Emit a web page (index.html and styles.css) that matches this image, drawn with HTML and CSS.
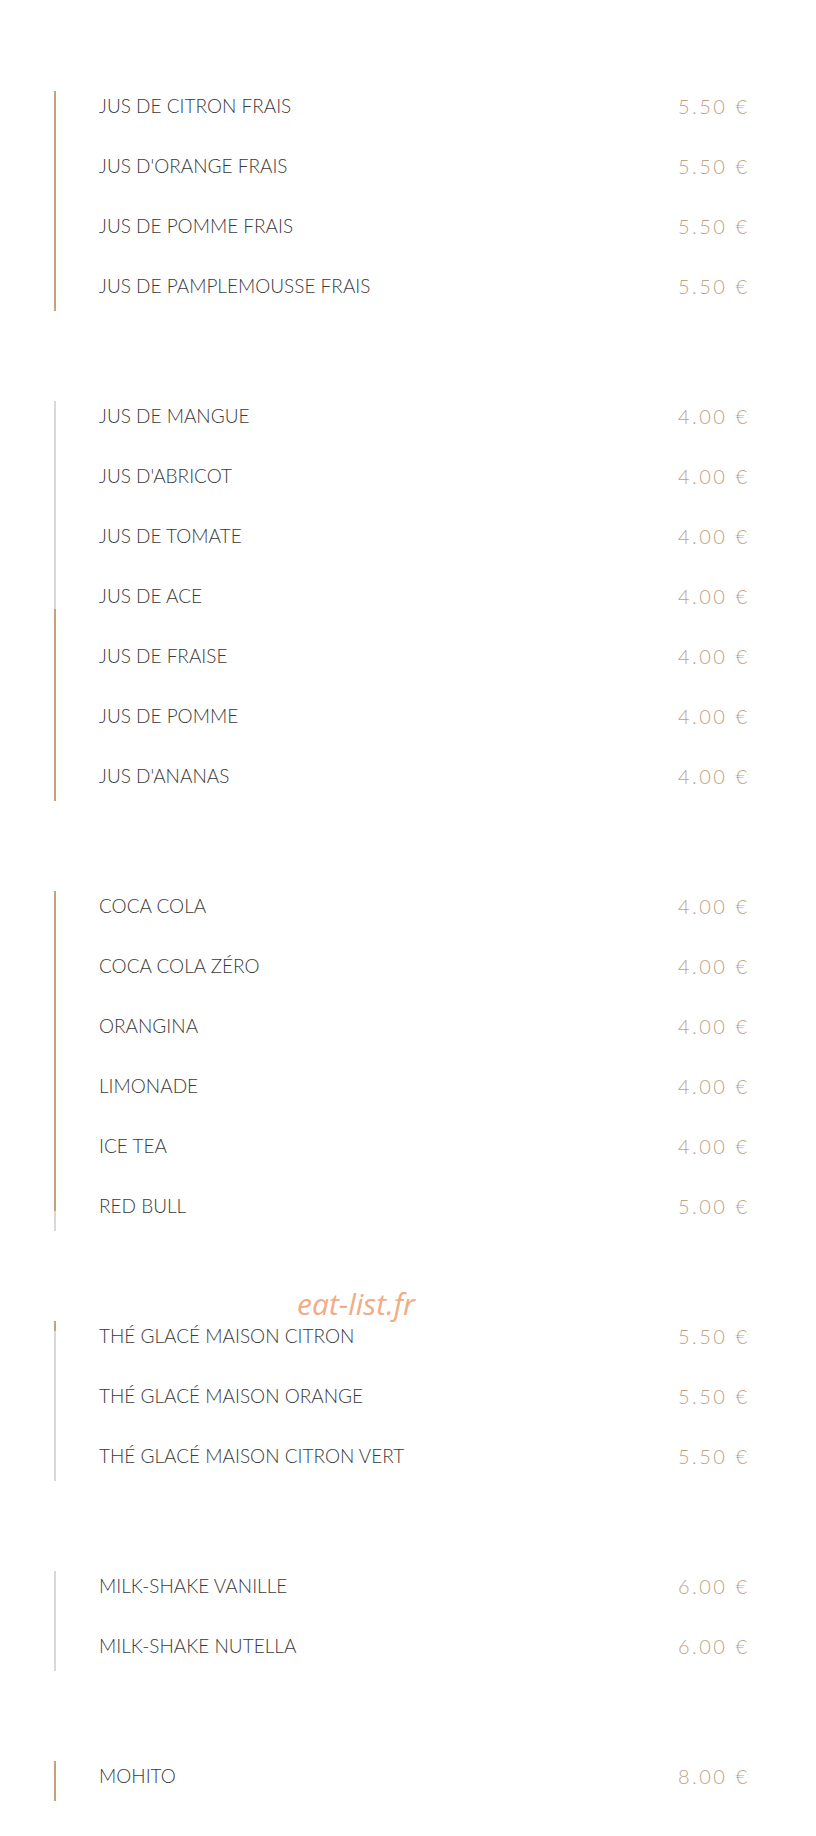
FILE: index.html
```html
<!DOCTYPE html>
<html lang="fr">

<head>
    <meta charset="UTF-8">
    <meta name="viewport" content="width=device-width, initial-scale=1.0">
    <title>Carte - Boissons</title>
    <link rel="stylesheet" href="styles.css">
</head>

<body>
    <div class="menu">

        <!-- Jus frais -->
        <section class="group">
            <div class="rail"><span class="fill" style="top: 0; height: 100%;"></span></div>
            <ul class="items">
                <li class="item"><span class="name">JUS DE CITRON FRAIS</span><span class="price">5.50 €</span></li>
                <li class="item"><span class="name">JUS D'ORANGE FRAIS</span><span class="price">5.50 €</span></li>
                <li class="item"><span class="name">JUS DE POMME FRAIS</span><span class="price">5.50 €</span></li>
                <li class="item"><span class="name">JUS DE PAMPLEMOUSSE FRAIS</span><span class="price">5.50 €</span></li>
            </ul>
        </section>

        <!-- Jus -->
        <section class="group">
            <div class="rail"><span class="fill" style="top: 208px; height: 192px;"></span></div>
            <ul class="items">
                <li class="item"><span class="name">JUS DE MANGUE</span><span class="price">4.00 €</span></li>
                <li class="item"><span class="name">JUS D'ABRICOT</span><span class="price">4.00 €</span></li>
                <li class="item"><span class="name">JUS DE TOMATE</span><span class="price">4.00 €</span></li>
                <li class="item"><span class="name">JUS DE ACE</span><span class="price">4.00 €</span></li>
                <li class="item"><span class="name">JUS DE FRAISE</span><span class="price">4.00 €</span></li>
                <li class="item"><span class="name">JUS DE POMME</span><span class="price">4.00 €</span></li>
                <li class="item"><span class="name">JUS D'ANANAS</span><span class="price">4.00 €</span></li>
            </ul>
        </section>

        <!-- Sodas -->
        <section class="group">
            <div class="rail"><span class="fill" style="top: 0; height: 320px;"></span></div>
            <ul class="items">
                <li class="item"><span class="name">COCA COLA</span><span class="price">4.00 €</span></li>
                <li class="item"><span class="name">COCA COLA ZÉRO</span><span class="price">4.00 €</span></li>
                <li class="item"><span class="name">ORANGINA</span><span class="price">4.00 €</span></li>
                <li class="item"><span class="name">LIMONADE</span><span class="price">4.00 €</span></li>
                <li class="item"><span class="name">ICE TEA</span><span class="price">4.00 €</span></li>
                <li class="item"><span class="name">RED BULL</span><span class="price">5.00 €</span></li>
            </ul>
        </section>

        <!-- Thés glacés -->
        <section class="group">
            <span class="watermark">eat-list.fr</span>
            <div class="rail"><span class="fill" style="top: 0; height: 10px;"></span></div>
            <ul class="items">
                <li class="item"><span class="name">THÉ GLACÉ MAISON CITRON</span><span class="price">5.50 €</span></li>
                <li class="item"><span class="name">THÉ GLACÉ MAISON ORANGE</span><span class="price">5.50 €</span></li>
                <li class="item"><span class="name">THÉ GLACÉ MAISON CITRON VERT</span><span class="price">5.50 €</span></li>
            </ul>
        </section>

        <!-- Milk-shakes -->
        <section class="group">
            <div class="rail"></div>
            <ul class="items">
                <li class="item"><span class="name">MILK-SHAKE VANILLE</span><span class="price">6.00 €</span></li>
                <li class="item"><span class="name">MILK-SHAKE NUTELLA</span><span class="price">6.00 €</span></li>
            </ul>
        </section>

        <!-- Cocktails -->
        <section class="group">
            <div class="rail"><span class="fill" style="top: 0; height: 100%;"></span></div>
            <ul class="items">
                <li class="item"><span class="name">MOHITO</span><span class="price">8.00 €</span></li>
            </ul>
        </section>

    </div>
</body>

</html>
```

FILE: styles.css
```css
/* Carte des boissons */
body {
    margin: 0;
    padding: 0;
    background-color: #fff;
    font-family: Lato, "Liberation Sans", sans-serif;
    font-weight: 300;
    color: #3a3a3a;
}

.menu {
    padding: 91px 40px 36px 54px;
}

.group {
    position: relative;
    display: flex;
    margin-bottom: 90px;
}

.group:last-child {
    margin-bottom: 0;
}

.rail {
    position: relative;
    flex: none;
    width: 2px;
    background-color: #d8d8d8;
}

.rail .fill {
    position: absolute;
    left: 0;
    width: 100%;
    background-color: #c4a27c;
}

.items {
    flex: 1;
    list-style: none;
    margin: 0;
    padding: 0 0 0 43px;
    display: flex;
    flex-direction: column;
    gap: 20px;
}

.item {
    display: grid;
    grid-template-columns: 1fr 98px;
    height: 40px;
    font-size: 19px;
    line-height: 30px;
}

.price {
    font-size: 20px;
    letter-spacing: 2.5px;
    color: #bfa37f;
}

.watermark {
    position: absolute;
    left: 243px;
    top: -38px;
    font-family: "Open Sans", sans-serif;
    font-style: italic;
    font-weight: 400;
    font-size: 30px;
    color: #f2ab86;
}
```
